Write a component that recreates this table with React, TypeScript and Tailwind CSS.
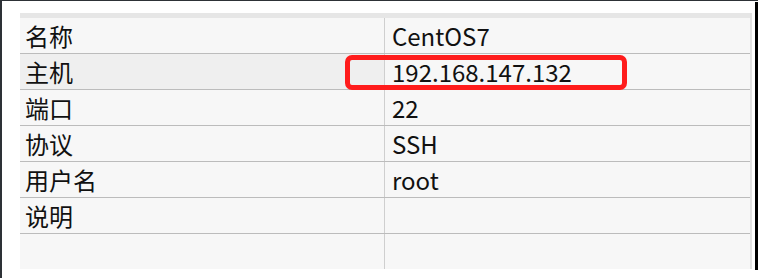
const rows = [
  { k: "名称", v: "CentOS7" },
  { k: "主机", v: "192.168.147.132", active: true },
  { k: "端口", v: "22" },
  { k: "协议", v: "SSH" },
  { k: "用户名", v: "root" },
  { k: "说明", v: "" },
  { k: "", v: "" },
];

const App = () => {
  return (
    <div className="flex h-[278px] w-[758px] bg-white border-l-2 border-t border-[#2d3136] font-['Noto_Sans_CJK_SC',sans-serif] text-[#111]">
      {/* Property table */}
      <div className="flex-1 pl-[18px] pt-[12px]">
        <div className="relative w-[732px] border-r-2 border-[#e2e2e2]">
          <div className="h-[5px] bg-[#e6e6e6]"></div>
          {rows.map((r, i) => (
            <div
              key={i}
              className={
                i === rows.length - 1
                  ? "flex h-[35px]"
                  : "flex h-[36px] border-b border-[#bcbcbc]"
              }
            >
              <div
                className={
                  (r.active ? "bg-[#efefef] " : "bg-[#f7f7f7] ") +
                  "flex w-[365px] items-center border-r border-[#cfcfcf] pl-[5px] text-[24px] leading-none"
                }
              >
                {r.k}
              </div>
              <div className="flex flex-1 items-center bg-[#f7f7f7] pl-[7px] text-[24px] leading-none">
                {r.v}
              </div>
            </div>
          ))}
          {/* Highlight box */}
          <div className="absolute left-[325px] top-[42px] h-[35px] w-[282px] rounded-[7px] border-[5px] border-[#ff1c1c]"></div>
        </div>
      </div>
      <div className="w-[3px] shrink-0 self-start mt-[1px] h-[268px] bg-black"></div>
    </div>
  );
};

export default App;
